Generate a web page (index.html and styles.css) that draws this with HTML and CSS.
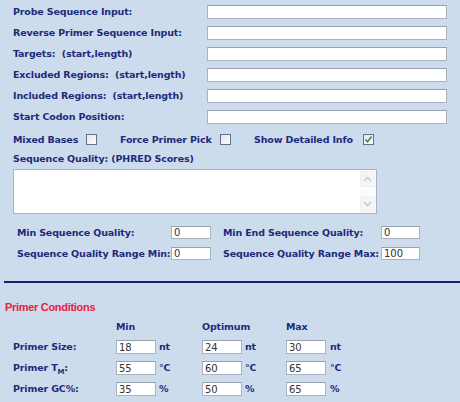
FILE: index.html
```html
<!DOCTYPE html>
<html>
<head>
<meta charset="utf-8">
<link rel="stylesheet" href="styles.css">
</head>
<body>
<div class="page">
  <div class="top">
    <label class="lbl">Probe Sequence Input:</label><input class="txt" type="text">
    <label class="lbl">Reverse Primer Sequence Input:</label><input class="txt" type="text">
    <label class="lbl">Targets: &nbsp;(start,length)</label><input class="txt" type="text">
    <label class="lbl">Excluded Regions: &nbsp;(start,length)</label><input class="txt" type="text">
    <label class="lbl">Included Regions: &nbsp;(start,length)</label><input class="txt" type="text">
    <label class="lbl">Start Codon Position:</label><input class="txt" type="text">
  </div>

  <div class="options">
    <span class="opt o1"><span class="lbl">Mixed Bases</span><span class="cb"></span></span>
    <span class="opt o2"><span class="lbl">Force Primer Pick</span><span class="cb"></span></span>
    <span class="opt o3"><span class="lbl">Show Detailed Info</span><span class="cb"><svg width="9" height="9" viewBox="0 0 9 9"><path d="M1.5 4.5 L3.6 6.8 L7.6 1.6" fill="none" stroke="#2c9a2c" stroke-width="1.7"/></svg></span></span>
  </div>

  <div class="lbl sq">Sequence Quality: (PHRED Scores)</div>
  <div class="tarea">
    <div class="tbody"></div>
    <div class="sbar">
      <div class="sbtn"><svg width="9" height="6" viewBox="0 0 9 6"><path d="M1 5 L4.5 1.5 L8 5" fill="none" stroke="#c4cbd2" stroke-width="1.4"/></svg></div>
      <div class="sbtn"><svg width="9" height="6" viewBox="0 0 9 6"><path d="M1 1 L4.5 4.5 L8 1" fill="none" stroke="#c4cbd2" stroke-width="1.4"/></svg></div>
    </div>
  </div>

  <div class="quality">
    <span class="lbl">Min Sequence Quality:</span><input class="sm" type="text" value="0">
    <span class="lbl c2">Min End Sequence Quality:</span><input class="sm" type="text" value="0">
    <span class="lbl">Sequence Quality Range Min:</span><input class="sm" type="text" value="0">
    <span class="lbl c2">Sequence Quality Range Max:</span><input class="sm" type="text" value="100">
  </div>

  <div class="rule"></div>

  <div class="heading">Primer Conditions</div>

  <div class="cond">
    <span></span><span class="lbl">Min</span><span></span><span class="lbl">Optimum</span><span></span><span class="lbl">Max</span><span></span>

    <span class="lbl">Primer Size:</span><input class="sm" type="text" value="18"><span class="lbl unit">nt</span><input class="sm" type="text" value="24"><span class="lbl unit">nt</span><input class="sm" type="text" value="30"><span class="lbl unit u3">nt</span>

    <span class="lbl">Primer T<sub>M</sub>:</span><input class="sm" type="text" value="55"><span class="lbl unit">°C</span><input class="sm" type="text" value="60"><span class="lbl unit">°C</span><input class="sm" type="text" value="65"><span class="lbl unit u3">°C</span>

    <span class="lbl">Primer GC%:</span><input class="sm" type="text" value="35"><span class="lbl unit">%</span><input class="sm" type="text" value="50"><span class="lbl unit">%</span><input class="sm" type="text" value="65"><span class="lbl unit u3">%</span>
  </div>
</div>
</body>
</html>
```

FILE: styles.css
```css
html, body {
  margin: 0;
  padding: 0;
  background: #cddcec;
}
.page {
  width: 460px;
  height: 402px;
  overflow: hidden;
  background: #cddcec;
  font-family: "DejaVu Sans", Verdana, sans-serif;
}
.lbl {
  font-family: "DejaVu Sans", Verdana, sans-serif;
  font-weight: bold;
  font-size: 9.5px;
  line-height: 12px;
  letter-spacing: -0.15px;
  color: #1e2a7a;
  white-space: nowrap;
}
input {
  box-sizing: border-box;
  margin: 0;
  border: 1px solid #a9b3be;
  border-top-color: #98a2ad;
  background: #fff;
  font-family: "DejaVu Sans", Verdana, sans-serif;
  font-size: 10px;
  color: #333;
  padding: 0 0 0 2px;
  outline: none;
}
.top {
  display: grid;
  grid-template-columns: 194px 240px;
  grid-auto-rows: 14px;
  row-gap: 7px;
  padding: 5px 0 0 13px;
  align-items: center;
}
.txt {
  width: 240px;
  height: 14px;
}
.options {
  display: flex;
  align-items: center;
  height: 11px;
  margin-top: 10px;
  padding-left: 13px;
}
.opt {
  display: flex;
  align-items: center;
}
.o1 .lbl { width: 73px; }
.o2 { margin-left: 23px; }
.o2 .lbl { width: 100px; }
.o3 { margin-left: 23px; }
.o3 .lbl { width: 109px; }
.cb {
  box-sizing: border-box;
  width: 11px;
  height: 11px;
  border: 1px solid #5f7290;
  background: linear-gradient(135deg, #e2e7ee, #fafbfc);
  display: flex;
  align-items: center;
  justify-content: center;
}
.sq {
  margin-top: 8px;
  padding-left: 13px;
}
.tarea {
  box-sizing: border-box;
  margin: 4px 0 0 13px;
  width: 364px;
  height: 45px;
  border: 1px solid #a9b3be;
  background: #fff;
  display: flex;
}
.tbody { flex: 1; }
.sbar {
  width: 15px;
  display: flex;
  flex-direction: column;
  justify-content: space-between;
  background: #fbfcfd;
  padding: 1px;
}
.sbtn {
  height: 14px;
  background: #f3f5f7;
  border: 1px solid #eef0f2;
  display: flex;
  align-items: center;
  justify-content: center;
}
.quality {
  display: grid;
  grid-template-columns: 154px 40px 12px 158px 39px;
  grid-auto-rows: 13px;
  row-gap: 8px;
  margin-top: 12px;
  padding-left: 17px;
  align-items: center;
}
.quality .c2 { grid-column: 4; }
.sm {
  width: 100%;
  height: 100%;
}
.quality .sm { height: 13px; }
.rule {
  margin: 21px 0 0 4px;
  height: 2px;
  background: #1b1f6e;
}
.heading {
  margin-top: 18px;
  padding-left: 5px;
  font-family: "Liberation Sans", Arial, sans-serif;
  font-weight: bold;
  font-size: 11px;
  line-height: 12px;
  color: #e4203c;
  letter-spacing: -0.3px;
}
.cond {
  display: grid;
  grid-template-columns: 103px 40px 46px 40px 44px 40px 40px;
  grid-template-rows: 12px 14px 14px 14px;
  row-gap: 7px;
  margin-top: 8px;
  padding-left: 13px;
  align-items: center;
}
.cond .sm { height: 14px; }
.unit { padding-left: 3px; }
.u3 { padding-left: 4px; }
sub {
  font-size: 7px;
  line-height: 0;
  vertical-align: -3px;
}
```
